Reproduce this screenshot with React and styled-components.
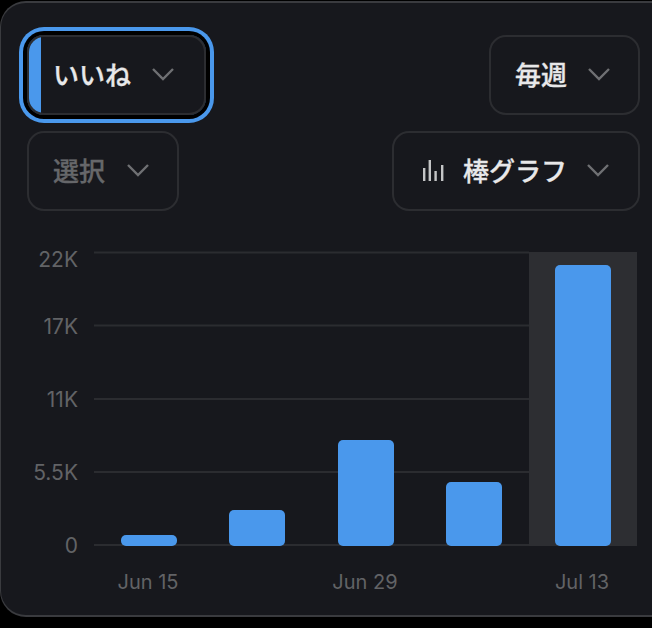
import React from "react";
import styled, { createGlobalStyle } from "styled-components";

const GlobalStyle = createGlobalStyle`
  html, body {
    margin: 0;
    background: #000;
  }
`;

// the card is cut off by the window on the right, so no right border or corners there
const Card = styled.div`
  box-sizing: border-box;
  width: 652px;
  height: 616px;
  margin-top: 1px;
  padding: 32px 12px 0 26px;
  background: #17181d;
  border: 2px solid #3a3b3f;
  border-left-width: 1px;
  border-right: 0;
  border-radius: 26px 0 0 26px;
  font-family: "Noto Sans CJK JP", "Inter", sans-serif;
`;

const Row = styled.div`
  display: flex;
  justify-content: space-between;
  margin-bottom: 16px;
`;

const Select = styled.div`
  position: relative;
  box-sizing: border-box;
  display: flex;
  align-items: center;
  gap: ${(p) => p.$gap || 20}px;
  width: ${(p) => p.$width}px;
  height: 80px;
  padding: 0 0 3px ${(p) => p.$pad || 24}px;
  border: 2px solid #2c2d31;
  border-radius: 17px;
  overflow: hidden;
  color: ${(p) => (p.$muted ? "#66676a" : "#e8e8e9")};
  font-size: 26px;
  font-weight: 500;
  -webkit-text-stroke: 0.3px currentColor;
  ${(p) => p.$focused && "box-shadow: 0 0 0 4px #000, 0 0 0 8px #4a98ec;"}

  ${(p) =>
    p.$focused &&
    `&::before {
      content: "";
      position: absolute;
      left: 0;
      top: 0;
      bottom: 0;
      width: 12px;
      background: #4a98ec;
    }`}
`;

const Label = styled.span`
  line-height: 1;
  white-space: nowrap;
`;

const ChartWrap = styled.div`
  margin: 18px 0 0 -26px;
  width: 651px;
  height: 400px;
`;

const Chart = styled.svg`
  display: block;
  font-family: "Inter", "Liberation Sans", sans-serif;
`;

const Chevron = () => (
  <svg width="24" height="14" viewBox="0 0 24 14" fill="none" stroke="#6f7073" strokeWidth="2.4">
    <path d="M2 2l10 10L22 2" />
  </svg>
);

const BarsIcon = () => (
  <svg width="21" height="22" viewBox="0 0 21 22" fill="#c4c5c6">
    <rect x="0" y="9" width="2.4" height="13" />
    <rect x="5.6" y="1" width="2.4" height="21" />
    <rect x="11.4" y="12" width="2.4" height="10" />
    <rect x="18" y="6" width="2.4" height="16" />
  </svg>
);

// [label, grid line y, text baseline y]
const yTicks = [
  ["22K", 252.5, 267],
  ["17K", 325.5, 334],
  ["11K", 399, 407],
  ["5.5K", 472, 480],
  ["0", 545, 553],
];

const bars = [
  { x: 121, top: 535 },
  { x: 229, top: 510 },
  { x: 338, top: 440 },
  { x: 446, top: 482 },
  { x: 555, top: 265 },
];

const xTicks = [
  ["Jun 15", 148],
  ["Jun 29", 365],
  ["Jul 13", 582],
];

// chart coordinates are page pixels, the wrapper starts at x=1, y=229
const App = () => {
  return (
    <>
      <GlobalStyle />
      <Card>
        <Row>
          <Select $width={179} $pad={24} $focused>
            <Label>いいね</Label>
            <Chevron />
          </Select>
          <Select $width={151}>
            <Label>毎週</Label>
            <Chevron />
          </Select>
        </Row>
        <Row>
          <Select $width={152} $pad={24} $gap={21} $muted>
            <Label>選択</Label>
            <Chevron />
          </Select>
          <Select $width={248} $pad={29} $gap={19}>
            <BarsIcon />
            <Label>棒グラフ</Label>
            <Chevron />
          </Select>
        </Row>
        <ChartWrap>
          <Chart width="651" height="385" viewBox="1 229 651 385">
            <rect x="529" y="252" width="108" height="294" fill="#2d2e32" />
            {yTicks.map(([label, y, base]) => (
              <g key={label}>
                <line x1="94" x2="529" y1={y} y2={y} stroke="#2b2c30" strokeWidth="2" />
                <text x="78" y={base} textAnchor="end" fill="#626366" fontSize="21">
                  {label}
                </text>
              </g>
            ))}
            {bars.map((b) => (
              <path
                key={b.x}
                d={`M${b.x} ${b.top + 5}a5 5 0 0 1 5-5h46a5 5 0 0 1 5 5V541a5 5 0 0 1-5 5h-46a5 5 0 0 1-5-5z`}
                fill="#4a98ec"
              />
            ))}
            {xTicks.map(([label, x]) => (
              <text key={label} x={x} y="589" textAnchor="middle" fill="#626366" fontSize="20">
                {label}
              </text>
            ))}
          </Chart>
        </ChartWrap>
      </Card>
    </>
  );
};

export default App;
